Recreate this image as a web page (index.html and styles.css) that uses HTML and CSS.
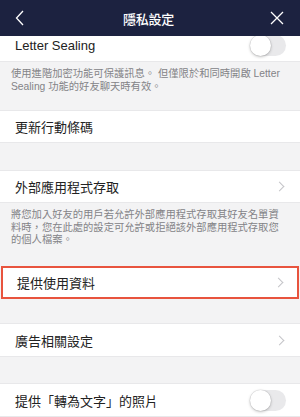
FILE: index.html
```html
<!DOCTYPE html>
<html lang="zh-Hant">
<head>
<meta charset="utf-8">
<link rel="stylesheet" href="styles.css">
</head>
<body>
<div class="screen">
  <header class="nav">
    <svg class="nav-icon" width="20" height="20" viewBox="0 0 20 20"><path d="M13 3 L6.5 10 L13 17" fill="none" stroke="#fff" stroke-width="1.3"/></svg>
    <div class="nav-title">隱私設定</div>
    <svg class="nav-icon" width="20" height="20" viewBox="0 0 20 20"><path d="M4 4 L16 16 M16 4 L4 16" fill="none" stroke="#fff" stroke-width="1.3"/></svg>
  </header>
  <main class="list">
    <div class="row row-first"><span class="label">Letter Sealing</span><span class="toggle"></span></div>
    <div class="desc desc-a">使用進階加密功能可保護訊息。 但僅限於和同時開啟 Letter<br>Sealing 功能的好友聊天時有效。</div>
    <div class="row"><span class="label">更新行動條碼</span></div>
    <div class="gap g1"></div>
    <div class="row"><span class="label">外部應用程式存取</span><span class="chev"></span></div>
    <div class="desc desc-b">將您加入好友的用戶若允許外部應用程式存取其好友名單資<br>料時，您在此處的設定可允許或拒絕該外部應用程式存取您<br>的個人檔案。</div>
    <div class="row row-marked"><span class="label">提供使用資料</span><span class="chev"></span></div>
    <div class="gap g2"></div>
    <div class="row row-tall"><span class="label">廣告相關設定</span><span class="chev"></span></div>
    <div class="gap g3"></div>
    <div class="row row-tall"><span class="label">提供「轉為文字」的照片</span><span class="toggle"></span></div>
  </main>
</div>
</body>
</html>
```

FILE: styles.css
```css
* { box-sizing: border-box; }
html, body { margin: 0; padding: 0; }
body {
  width: 300px;
  height: 417px;
  overflow: hidden;
  background: #f3f3f4;
  font-family: "Liberation Sans", "Noto Sans CJK TC", sans-serif;
}
.screen { display: flex; flex-direction: column; height: 417px; }
.nav {
  height: 36px;
  flex: none;
  background: #1c2240;
  display: flex;
  align-items: center;
  justify-content: space-between;
  padding: 0 13px 0 10px;
  position: relative;
  z-index: 2;
}
.nav-icon { display: block; }
.nav-title {
  color: #fff;
  font-size: 13px;
  font-weight: 500;
  letter-spacing: -0.2px;
}
.list { flex: 1; overflow: hidden; }
.row {
  height: 33px;
  background: #fff;
  display: flex;
  align-items: center;
  justify-content: space-between;
  padding: 0 15px 0 15px;
  border-top: 1px solid #e8e8ea;
  border-bottom: 1px solid #e8e8ea;
}
.row-first { margin-top: -7px; border-top: none; height: 33px; }
.row-tall { height: 34px; }
.label {
  font-size: 13px;
  color: #222;
}
.toggle {
  width: 36px;
  height: 21px;
  border-radius: 11px;
  background: #e9e9eb;
  position: relative;
  margin-right: -1px;
}
.toggle::after {
  content: "";
  position: absolute;
  left: 0;
  top: 0;
  width: 21px;
  height: 21px;
  border-radius: 50%;
  background: #fff;
  box-shadow: 0 1px 3px rgba(0,0,0,0.25), 0 0 0 0.5px rgba(0,0,0,0.08);
}
.chev {
  width: 7px;
  height: 7px;
  border-top: 1.2px solid #c4c4c8;
  border-right: 1.2px solid #c4c4c8;
  transform: rotate(45deg);
  margin-right: 2px;
}
.desc {
  font-size: 10.3px;
  line-height: 12.5px;
  color: #838387;
  padding: 6px 0 0 11px;
  white-space: nowrap;
}
.desc-a { height: 48px; }
.desc-b { height: 63px; }
.g1 { height: 27px; }
.g2 { height: 24px; }
.g3 { height: 26px; }
.row-marked {
  margin: 0 1px;
  border: 2px solid #e8543e;
  padding: 0 13px 0 14px;
}
```
